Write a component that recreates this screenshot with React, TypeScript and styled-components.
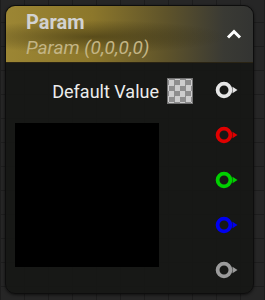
import styled, {createGlobalStyle} from 'styled-components';

const GlobalStyle = createGlobalStyle`
  html, body {
    margin: 0;
    padding: 0;
  }
  body {
    width: 265px;
    height: 300px;
    overflow: hidden;
    background-color: #262626;
    background-image:
      linear-gradient(to right, #1d1d1d 1px, transparent 1px),
      linear-gradient(to bottom, #1d1d1d 1px, transparent 1px);
    background-size: 24px 24px;
    background-position: 0 -2px;
    font-family: Roboto, "Noto Sans", sans-serif;
  }
`;

const Node = styled.div`
  box-sizing: border-box;
  margin: 5px 0 0 5px;
  width: 249px;
  height: 289px;
  border-radius: 10px;
  background: rgba(22, 23, 20, 0.88);
  border: 1px solid #0d0d0d;
  box-shadow: 0 1px 3px rgba(0, 0, 0, 0.6);
  overflow: hidden;
  display: flex;
  flex-direction: column;
`;

const Header = styled.div`
  height: 56px;
  flex: none;
  display: flex;
  align-items: center;
  justify-content: space-between;
  padding: 0 11px 0 20px;
  background:
    radial-gradient(ellipse 55% 30% at 35% 55%, rgba(40, 34, 10, 0.5), transparent),
    linear-gradient(90deg, #9c8634 0%, #8c772b 35%, #5e532a 65%, #3a3a34 88%, #333432 100%);
  border-bottom: 1px solid #2a2414;
`;

const Titles = styled.div`
  display: flex;
  flex-direction: column;
  margin-top: 4px;
`;

const Title = styled.div`
  color: #d2d2d2;
  font-size: 20px;
  font-weight: 700;
  line-height: 24px;
`;

const Subtitle = styled.div`
  color: #c3b585;
  font-size: 19px;
  font-style: italic;
  line-height: 28px;
`;

const Body = styled.div`
  flex: 1;
  display: flex;
  padding: 18px 12px 0 9px;
`;

const Main = styled.div`
  flex: 1;
  display: flex;
  flex-direction: column;
`;

const ValueRow = styled.div`
  display: flex;
  align-items: center;
  justify-content: flex-end;
  gap: 8px;
  height: 26px;
  margin-top: -3px;
  padding-right: 22px;
`;

const Label = styled.span`
  color: #ececec;
  font-size: 18px;
`;

const Swatch = styled.div`
  box-sizing: border-box;
  width: 26px;
  height: 26px;
  border: 1px solid #737373;
  background-color: #cdcdcd;
  background-image: conic-gradient(#8e8e8e 25%, transparent 0 50%, #8e8e8e 0 75%, transparent 0);
  background-size: 11px 11px;
  background-position: 1px 1px;
`;

const Preview = styled.div`
  width: 144px;
  height: 144px;
  margin-top: 19px;
  background: #000;
`;

const Pins = styled.div`
  display: flex;
  flex-direction: column;
  gap: 27px;
  width: 26px;
`;

type PinProps = {color: string; dim?: boolean};

function Pin({color, dim}: PinProps) {
  return (
    <svg width="26" height="18" viewBox="0 0 26 18">
      <circle cx="9" cy="9" r="6.4" fill="none" stroke={color} strokeWidth="3.8" opacity={dim ? 0.8 : 1} />
      <path d="M17.5 5.8 L22.5 9 L17.5 12.2 Z" fill={color} opacity={dim ? 0.8 : 1} />
    </svg>
  );
}

function Chevron() {
  return (
    <svg width="16" height="12" viewBox="0 0 16 12">
      <path d="M2 9.5 L8 3.5 L14 9.5" fill="none" stroke="#ffffff" strokeWidth="3" />
    </svg>
  );
}

export default function App(): JSX.Element {
  return (
    <>
      <GlobalStyle />
      <Node>
        <Header>
          <Titles>
            <Title>Param</Title>
            <Subtitle>Param (0,0,0,0)</Subtitle>
          </Titles>
          <Chevron />
        </Header>
        <Body>
          <Main>
            <ValueRow>
              <Label>Default Value</Label>
              <Swatch />
            </ValueRow>
            <Preview />
          </Main>
          <Pins>
            <Pin color="#e6e6e6" />
            <Pin color="#e00000" />
            <Pin color="#00d000" />
            <Pin color="#0000f0" />
            <Pin color="#bdbdbd" dim />
          </Pins>
        </Body>
      </Node>
    </>
  );
}
